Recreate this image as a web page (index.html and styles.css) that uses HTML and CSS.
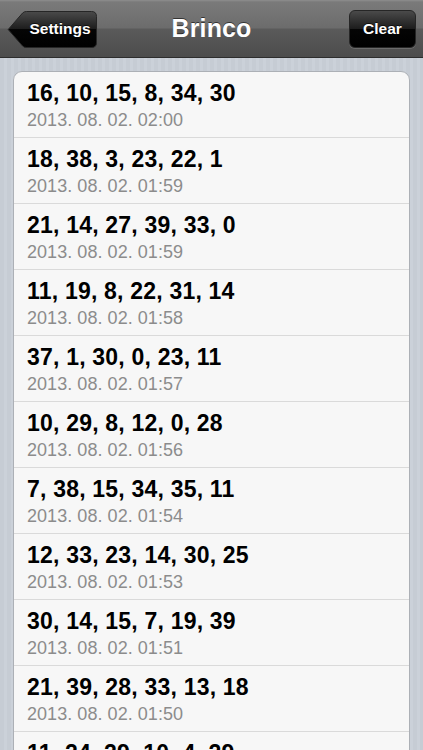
FILE: index.html
```html
<!DOCTYPE html>
<html lang="en">
<head>
<meta charset="utf-8">
<title>Brinco</title>
<link rel="stylesheet" href="styles.css">
</head>
<body>
<header class="navbar">
  <button class="btn-back" type="button">
    <svg class="back-shape" width="91" height="39" viewBox="0 0 91 39" aria-hidden="true">
      <defs>
        <linearGradient id="bg" x1="0" y1="0" x2="0" y2="1">
          <stop offset="0" stop-color="#4a4a4a"/>
          <stop offset="0.5" stop-color="#1c1c1c"/>
          <stop offset="0.5" stop-color="#050505"/>
          <stop offset="1" stop-color="#000"/>
        </linearGradient>
      </defs>
      <path d="M1.2 19.5 L15.6 3 Q17 1.5 19.5 1.5 H84.5 Q89.5 1.5 89.5 6.5 V32.5 Q89.5 37.5 84.5 37.5 H19.5 Q17 37.5 15.6 36 Z" fill="url(#bg)" stroke="#262626" stroke-width="1"/>
    </svg>
    <span class="back-label">Settings</span>
  </button>
  <h1 class="title">Brinco</h1>
  <button class="btn-clear" type="button">Clear</button>
</header>

<main class="content">
  <ul class="card">
    <li class="row"><div class="nums">16, 10, 15, 8, 34, 30</div><div class="date">2013. 08. 02. 02:00</div></li>
    <li class="row"><div class="nums">18, 38, 3, 23, 22, 1</div><div class="date">2013. 08. 02. 01:59</div></li>
    <li class="row"><div class="nums">21, 14, 27, 39, 33, 0</div><div class="date">2013. 08. 02. 01:59</div></li>
    <li class="row"><div class="nums">11, 19, 8, 22, 31, 14</div><div class="date">2013. 08. 02. 01:58</div></li>
    <li class="row"><div class="nums">37, 1, 30, 0, 23, 11</div><div class="date">2013. 08. 02. 01:57</div></li>
    <li class="row"><div class="nums">10, 29, 8, 12, 0, 28</div><div class="date">2013. 08. 02. 01:56</div></li>
    <li class="row"><div class="nums">7, 38, 15, 34, 35, 11</div><div class="date">2013. 08. 02. 01:54</div></li>
    <li class="row"><div class="nums">12, 33, 23, 14, 30, 25</div><div class="date">2013. 08. 02. 01:53</div></li>
    <li class="row"><div class="nums">30, 14, 15, 7, 19, 39</div><div class="date">2013. 08. 02. 01:51</div></li>
    <li class="row"><div class="nums">21, 39, 28, 33, 13, 18</div><div class="date">2013. 08. 02. 01:50</div></li>
    <li class="row"><div class="nums">11, 24, 29, 10, 4, 29</div><div class="date">2013. 08. 02. 01:49</div></li>
  </ul>
</main>
</body>
</html>
```

FILE: styles.css
```css
html, body {
  margin: 0;
  padding: 0;
  height: 750px;
  overflow: hidden;
}

body {
  font-family: "Liberation Sans", Arial, sans-serif;
  background-color: #c8ced6;
  background-image: repeating-linear-gradient(to right, #c6ccd4 0, #c6ccd4 4px, #cbd1d9 4px, #cbd1d9 7px);
}

.navbar {
  height: 58px;
  box-sizing: border-box;
  display: grid;
  grid-template-columns: 1fr auto 1fr;
  align-items: center;
  padding: 0 7px;
  background: linear-gradient(#8e8e8e 0, #7a7a7a 2px, #6c6c6c 28px, #5a5a5a 29px, #4c4c4c 57px);
  border-bottom: 1px solid #2d2d2d;
}

.title {
  margin: 0;
  font-size: 25px;
  font-weight: bold;
  color: #fff;
  text-shadow: 0 -1px 0 rgba(0, 0, 0, 0.55);
  letter-spacing: 0.1px;
  padding-bottom: 1px;
}

.btn-back {
  justify-self: start;
  display: grid;
  padding: 0;
  margin: 1px 0 0 0;
  border: 0;
  background: none;
  width: 91px;
  height: 39px;
  cursor: pointer;
}

.back-shape,
.back-label {
  grid-area: 1 / 1;
}

.back-label {
  align-self: center;
  justify-self: start;
  margin-left: 16px;
  width: 74px;
  text-align: center;
  font-family: "Liberation Sans", Arial, sans-serif;
  font-size: 15.5px;
  font-weight: bold;
  color: #fff;
  text-shadow: 0 -1px 0 rgba(0, 0, 0, 0.6);
}

.btn-clear {
  justify-self: end;
  margin: 1px 0 0 0;
  width: 67px;
  height: 38px;
  padding: 0;
  border: 1px solid #262626;
  border-radius: 6px;
  background: linear-gradient(#4a4a4a 0, #1c1c1c 50%, #050505 50%, #000 100%);
  box-shadow: 0 1px 0 rgba(255, 255, 255, 0.15);
  font-family: "Liberation Sans", Arial, sans-serif;
  font-size: 15.5px;
  font-weight: bold;
  color: #fff;
  text-shadow: 0 -1px 0 rgba(0, 0, 0, 0.6);
  cursor: pointer;
}

.content {
  padding: 13px 13px 0 13px;
}

.card {
  list-style: none;
  margin: 0;
  padding: 0;
  background: #f7f7f7;
  border: 1px solid #acb0b6;
  border-radius: 9px;
  box-shadow: 0 1px 0 rgba(255, 255, 255, 0.6);
}

.row {
  height: 66px;
  box-sizing: border-box;
  padding: 8px 13px 0 13px;
  border-bottom: 1px solid #dadada;
}

.nums {
  font-size: 23px;
  line-height: 26px;
  font-weight: bold;
  color: #000;
  letter-spacing: 0.2px;
}

.date {
  margin-top: 3px;
  font-size: 18px;
  line-height: 22px;
  color: #8c8c8c;
  letter-spacing: 0.05px;
}
```
